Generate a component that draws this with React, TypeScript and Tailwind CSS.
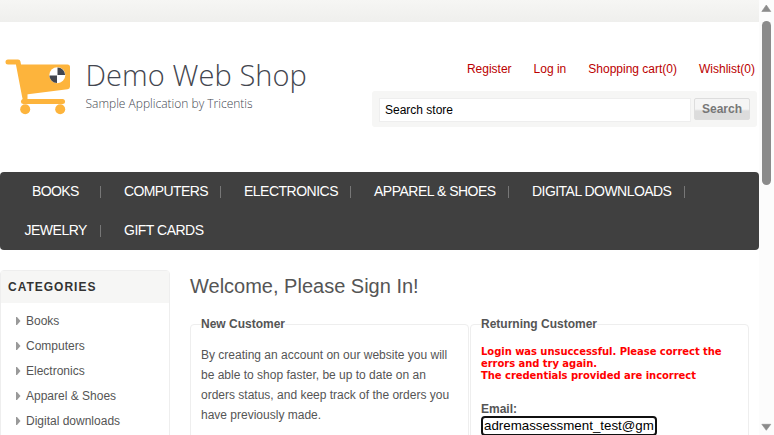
import React from 'react';

const menuRows = [
  [
    { label: 'BOOKS', cls: 'w-[101px] pl-[32px]', text: 'tracking-[-0.6px]', sep: true },
    { label: 'COMPUTERS', cls: 'w-[120px] pl-[23px]', text: 'tracking-[-0.6px]', sep: true },
    { label: 'ELECTRONICS', cls: 'w-[130px] pl-[23px]', text: 'tracking-[-0.5px]', sep: true },
    { label: 'APPAREL & SHOES', cls: 'w-[158px] pl-[23px]', text: 'tracking-[-0.5px]', sep: true },
    { label: 'DIGITAL DOWNLOADS', cls: 'w-[176px] pl-[23px]', text: 'tracking-[-0.54px]', sep: true },
  ],
  [
    { label: 'JEWELRY', cls: 'w-[101px] pl-[24.5px]', text: 'tracking-[-0.5px]', sep: true },
    { label: 'GIFT CARDS', cls: 'w-[120px] pl-[23px]', text: 'tracking-[-0.5px]', sep: false },
  ],
];

const categories = ['Books', 'Computers', 'Electronics', 'Apparel & Shoes', 'Digital downloads'];

const Logo = () => (
  <div className="flex h-[62px] w-[320px] pt-0">
    <svg width="80" height="62" viewBox="0 0 80 62" className="shrink-0">
      <path
        d="M8 4H18L24.5 38"
        fill="none"
        stroke="#fdb43c"
        strokeWidth="5"
        strokeLinecap="round"
        strokeLinejoin="round"
      />
      <path d="M19 6.5H67.5Q70 6.5 70 9V28.5Q70 31 67.5 31.3L26 36.5Z" fill="#fdb43c" />
      <path d="M23.5 43.5H62.5" stroke="#fdb43c" strokeWidth="5" strokeLinecap="round" />
      <path d="M25 35V43" stroke="#fdb43c" strokeWidth="5" />
      <circle cx="25.2" cy="51.3" r="5" fill="#fdb43c" />
      <circle cx="60.2" cy="51.3" r="5" fill="#fdb43c" />
      <circle cx="57.3" cy="17.2" r="8" fill="#fff" />
      <path d="M57.5 17V9.4A7.6 7.6 0 0 1 65.1 17ZM57 17.5V25.1A7.6 7.6 0 0 1 49.4 17.5Z" fill="#43464f" />
    </svg>
    <div className="pl-[5.5px] font-['Open_Sans',sans-serif] font-light whitespace-nowrap text-[#43464f]">
      <div className="h-[36px] text-[29px] leading-[34px] tracking-[0.08px]">Demo Web Shop</div>
      <div className="text-[12px] leading-[20px] text-[#43464f]">Sample Application by Tricentis</div>
    </div>
  </div>
);

const Scrollbar = () => (
  <div className="flex h-full w-[15px] flex-col items-center bg-[#fcfcfc]">
    <svg width="15" height="20" viewBox="0 0 15 20">
      <path d="M7.3 5L11.8 11.5H2.8Z" fill="#8b8b8b" stroke="#8b8b8b" strokeLinejoin="round" strokeWidth=".6" />
    </svg>
    <div className="mt-[1px] h-[164px] w-[9px] rounded-full bg-[#8b8b8b]" />
    <div className="flex-1" />
    <svg width="15" height="20" viewBox="0 0 15 20">
      <path d="M7.3 15.3L11.8 9.3H2.8Z" fill="#8b8b8b" stroke="#8b8b8b" strokeLinejoin="round" strokeWidth=".6" />
    </svg>
  </div>
);

export default function App() {
  return (
    <div className="flex h-[435px] w-[774px] overflow-hidden bg-white font-['Liberation_Sans',Arial,sans-serif] text-[12px] text-[#555]">
      <div className="h-full w-[759px] overflow-hidden">
        <div className="h-[22px] bg-linear-to-b from-[#f6f6f4] to-[#efefed]" />
        <header className="flex h-[150px] justify-between">
          <div className="pt-[36px]">
            <Logo />
          </div>
          <div className="w-[387px] pr-[2px] pt-[39px]">
            <nav className="flex h-[30px] justify-end gap-[22px] pr-[2px] leading-[16px] whitespace-nowrap text-[#b00]">
              <a>Register</a>
              <a>Log in</a>
              <a>Shopping cart(0)</a>
              <a>Wishlist(0)</a>
            </nav>
            <div className="flex h-[36px] rounded-[3px] bg-[#f6f6f5] pt-[7px] pl-[7px]">
              <div className="h-[24px] w-[312px] border border-[#eee] bg-white pl-[5px] leading-[22px] text-black">Search store</div>
              <button className="ml-[3px] h-[22px] w-[56px] rounded-[2px] border border-[#ddd] bg-linear-to-b from-[#f5f5f5] from-50% to-[#dcdcdc] to-60% text-[12px] leading-[18px] font-bold text-[#777]">
                Search
              </button>
            </div>
          </div>
        </header>

        <nav className="h-[78px] rounded-[4px] bg-[#404040] text-[14px] text-white">
          {menuRows.map((row, i) => (
            <div key={i} className="flex h-[39px] items-center">
              {row.map((item) => (
                <div key={item.label} className={`flex shrink-0 items-center justify-between whitespace-nowrap ${item.cls}`}>
                  <span className={item.text}>{item.label}</span>
                  {item.sep && <i className="mt-[1px] h-[12px] w-px bg-[#777]" />}
                </div>
              ))}
            </div>
          ))}
        </nav>

        <main className="flex pt-[20px]">
          <aside className="h-[180px] w-[170px] rounded-t-[4px] border border-[#eee]">
            <h2 className="h-[32px] bg-[#f6f6f5] pl-[7px] text-[12px] leading-[32px] font-bold tracking-[1px] text-[#333]">CATEGORIES</h2>
            <ul className="pt-[5px]">
              {categories.map((c) => (
                <li key={c} className="flex h-[25px] items-center pl-[15px]">
                  <svg width="5" height="8" viewBox="0 0 5 8" className="mr-[5px]">
                    <path d="M0 0H1L4.5 4L1 8H0Z" fill="#999" />
                  </svg>
                  {c}
                </li>
              ))}
            </ul>
          </aside>

          <section className="ml-[20px] w-[560px]">
            <h1 className="h-[47px] text-[20px] leading-[32px]">Welcome, Please Sign In!</h1>
            <div className="flex items-start gap-px">
              <fieldset className="h-[180px] w-[279px] rounded-[4px] border border-[#eee] px-[10px]">
                <legend className="h-[14px] text-[12px] leading-[14px] font-bold">New Customer</legend>
                <p className="pt-[14px] leading-[20px] whitespace-nowrap">
                  By creating an account on our website you will
                  <br />
                  be able to shop faster, be up to date on an
                  <br />
                  orders status, and keep track of the orders you
                  <br />
                  have previously made.
                </p>
              </fieldset>
              <fieldset className="h-[180px] w-[279px] rounded-[4px] border border-[#eee] px-[10px]">
                <legend className="h-[14px] text-[12px] leading-[14px] font-bold">Returning Customer</legend>
                <p className="pt-[15px] font-['DejaVu_Sans',Verdana,sans-serif] text-[10px] leading-[12px] font-bold tracking-[-0.05px] whitespace-nowrap text-[#f00]">
                  Login was unsuccessful. Please correct the
                  <br />
                  errors and try again.
                  <br />
                  The credentials provided are incorrect
                </p>
                <div className="mt-[19px] h-[15px] leading-[16px] font-bold">Email:</div>
                <div className="h-[20px] w-[176px] overflow-hidden rounded-[4px] border-2 border-[#101010] bg-white pl-[1px] text-[13.333px] leading-[16px] whitespace-nowrap text-black">
                  adremassessment_test@gm
                </div>
              </fieldset>
            </div>
          </section>
        </main>
      </div>
      <Scrollbar />
    </div>
  );
}
